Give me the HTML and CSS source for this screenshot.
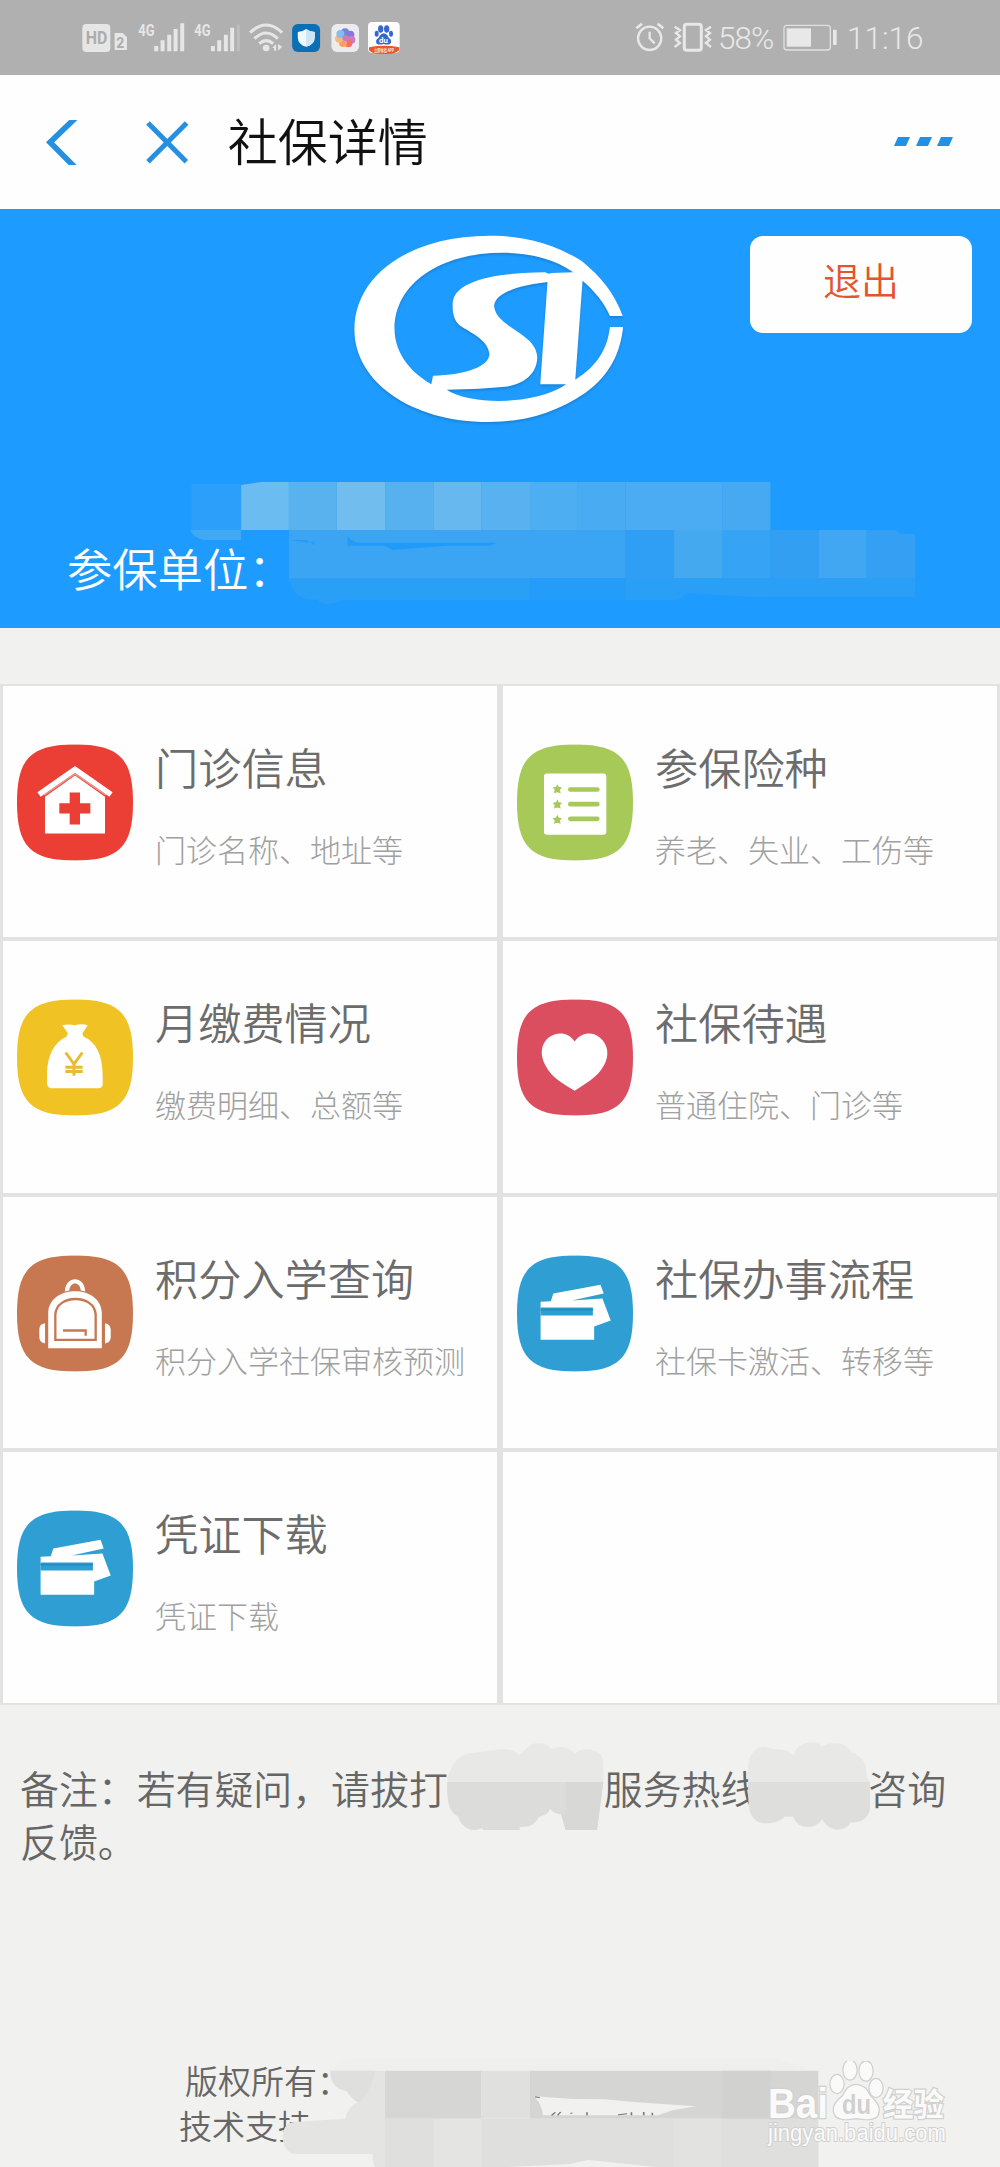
FILE: index.html
```
<!DOCTYPE html>
<html lang="zh-CN">
<head>
<meta charset="utf-8">
<title>社保详情</title>
<link rel="stylesheet" href="styles.css">
</head>
<body>
<svg class="defs" width="0" height="0">
  <defs>
    <symbol id="squircle" viewBox="0 0 100 100"><path d="M50 0C88 0 100 12 100 50S88 100 50 100 0 88 0 50 12 0 50 0Z"/></symbol>
    <symbol id="cards" viewBox="0 0 348 350">
      <g transform="scale(1.913 1) translate(-811 -78)" fill="#fff">
        <path d="M848 218L864 216 868 193 942 167 947 193 897 214 945 208 958 274 932 292V332H848Z"/>
        <path d="M848 235H930V259H848Z" fill="#2f9ed3"/>
        <path d="M848 239H930V244H848Z" fill="#2488bd"/>
      </g>
    </symbol>
  </defs>
</svg>
<div class="screen">
  <div class="status">
    <svg class="status-left" viewBox="60 0 970 225" width="323" height="75">
      <g fill="#e6e6e6">
        <rect x="67" y="72" width="84" height="84" rx="12"/>
        <path d="M164 99H188L201 112V150H164Z"/>
        <text x="235" y="107" font-size="49" font-weight="700" textLength="49" lengthAdjust="spacingAndGlyphs">4G</text>
        <text x="403" y="107" font-size="49" font-weight="700" textLength="49" lengthAdjust="spacingAndGlyphs">4G</text>
        <path d="M283 138h12v16h-12zM302 121h12v33h-12zM322 104h12v50h-12zM341 87h12v67h-12zM361 70h12v84h-12zM453 138h12v16h-12zM472 121h12v33h-12zM492 104h12v50h-12zM511 83h12v71h-12z"/>
        <path d="M531 74h9v80h-9z" opacity=".25"/>
        <circle cx="619" cy="144" r="10"/>
        <path d="M649 132V152H643V144H637ZM655 132V152L667 140Z"/>
      </g>
      <g fill="none" stroke="#e6e6e6" stroke-width="9"><path d="M571 98Q619 52 667 98M584 116Q619 82 654 116M598 131Q619 113 640 131"/></g>
      <text x="77" y="133" font-size="54" font-weight="700" fill="#acacac" textLength="65" lengthAdjust="spacingAndGlyphs">HD</text>
      <text x="169" y="143" font-size="42" font-weight="700" fill="#acacac">2</text>
      <rect x="697" y="72" width="84" height="84" rx="17" fill="#0b6fb5"/>
      <path d="M739 87Q750 96 765 96V113Q764 134 739 140Q715 134 714 113V96Q728 96 739 87Z" fill="#eefaff"/>
      <path d="M739 87Q750 96 765 96V113Q764 134 739 140Z" fill="#cde6f4"/>
      <rect x="815" y="72" width="83" height="84" rx="17" fill="#ececef"/>
      <g opacity=".85"><circle cx="856" cy="97" r="12" fill="#5b75de"/><circle cx="872" cy="104" r="12" fill="#7862d2"/><circle cx="875" cy="119" r="12" fill="#c767bb"/><circle cx="866" cy="130" r="12" fill="#f45b55"/><circle cx="850" cy="129" r="12" fill="#ff904e"/><circle cx="838" cy="116" r="12" fill="#ffae67"/><circle cx="842" cy="102" r="12" fill="#73b4f3"/><circle cx="857" cy="114" r="9" fill="#c06ab0"/></g>
      <rect x="925" y="66" width="95" height="92" rx="12" fill="#fff"/>
      <g fill="#3568cf"><ellipse cx="963" cy="87" rx="8" ry="11"/><ellipse cx="981" cy="87" rx="8" ry="11"/><ellipse cx="951" cy="101" rx="6" ry="9"/><ellipse cx="994" cy="101" rx="6" ry="9"/><path d="M972 100Q982 101 987 113 1000 122 991 132 984 135 972 132 958 136 951 131 945 121 957 113 963 101 972 100Z"/></g>
      <text x="958" y="130" font-size="24" font-weight="700" fill="#fff">du</text>
      <path d="M928 142Q972 133 1019 142V151Q1009 160 988 162H958Q935 160 928 151Z" fill="#e8582c"/>
      <text x="943" y="156" font-size="14" font-weight="700" fill="#ffe7d8" textLength="60" lengthAdjust="spacingAndGlyphs">立即体验 APP</text>
    </svg>
    <div class="status-right">
      <svg viewBox="40 0 235 225" width="78.3" height="75" fill="none" stroke="#e8e8e8">
        <circle cx="84" cy="115" r="35" stroke-width="7"/><path d="M84 95V115L99 130" stroke-width="7"/><path d="M44 85L61 71M108 71L125 85" stroke-width="8"/>
        <rect x="188" y="73" width="51" height="78" rx="7" stroke-width="9"/>
        <path d="M159 80L175 90 163 99 175 109 163 119 175 129 159 141M268 80L253 90 265 99 253 109 265 119 253 129 268 141" stroke-width="7"/>
      </svg>
      <span class="percent">58%</span>
      <svg viewBox="484 0 162 225" width="54" height="75"><rect x="487" y="76" width="139" height="74" rx="9" fill="none" stroke="#e0e0e0" stroke-width="4"/><path d="M495 85H568V140H495Z" fill="#e8e8e8"/><rect x="634" y="89" width="11" height="46" rx="3" fill="#e8e8e8"/></svg>
      <span class="clock">11:16</span>
    </div>
  </div>

  <header class="nav">
    <svg class="back" viewBox="140 119 95 135" width="31.7" height="45"><path d="M228 113L152 186 226 260" fill="none" stroke="#2590e2" stroke-width="17"/></svg>
    <svg class="close" viewBox="435 115 135 135" width="45" height="45"><path d="M444 124L559 240M560 124L444 240" stroke="#2590e2" stroke-width="15"/></svg>
    <h1>社保详情</h1>
    <svg class="more" viewBox="0 0 60 12" width="60" height="12" fill="#2590e2"><path d="M4 1H16L12 10H0ZM26 1H38L34 10H22ZM47 1H59L55 10H43Z"/></svg>
  </header>

  <section class="banner">
    <svg class="logo" viewBox="50 70 650 580" width="277.7" height="193.3" preserveAspectRatio="none" fill="#fff">
      <path d="M686 319H656C646 285 618 240 592 213L575 510C625 470 650 420 656 352H687C681 425 658 496 598 550C530 610 455 637 372 637C190 637 58 515 58 360C58 195 190 78 375 78C460 78 530 106 590 154C635 200 668 254 686 319ZM570 188C530 150 470 129 405 129C260 129 152 220 152 358C152 420 180 480 238 524L242 498C320 495 374 470 374 432C370 395 340 375 310 352C292 338 287 315 288 280C292 220 370 190 505 188L512 192 520 190ZM510 217C430 228 386 255 385 290C390 355 484 370 486 443C485 505 440 528 410 531Q355 538 274 540C325 585 480 590 554 524H493Z" fill-rule="evenodd"/>
    </svg>
    <button class="logout">退出</button>
    <p class="company">参保单位：</p>
    <svg class="mosaic" viewBox="0 0 1568 504" preserveAspectRatio="none">
      <path d="M300 72H378V210H300Z" fill="#2b9ff9"/>
      <path d="M298 210H378V240H318Q302 230 298 210Z" fill="#41a8f3"/>
      <path d="M378 75L410 66H453V210H378Z" fill="#6bbcf0"/>
      <path d="M453 66H528V210H453Z" fill="#59b1ee"/><path d="M528 66H604V210H528Z" fill="#70bdee"/><path d="M604 66H680V210H604Z" fill="#57b1ef"/><path d="M680 66H755V210H680Z" fill="#66b8ee"/><path d="M755 66H831V210H755Z" fill="#59b1ef"/><path d="M831 66H906V210H831Z" fill="#4eaef2"/><path d="M906 66H981V210H906Z" fill="#49abf2"/><path d="M981 66H1133V210H981Z" fill="#4bacf3"/><path d="M1133 66H1208V210H1133Z" fill="#46a9f2"/>
      <path d="M453 210H981V354H453Z" fill="#3ba5f3"/><path d="M981 210H1057V354H981Z" fill="#2f9ff5"/><path d="M1057 210H1133V354H1057Z" fill="#45a9f0"/><path d="M1133 210H1208V354H1133Z" fill="#36a3f4"/><path d="M1208 210H1284V354H1208Z" fill="#339ff3"/><path d="M1284 210H1359V354H1284Z" fill="#41a7f3"/><path d="M1359 210H1405L1412 222H1435V354H1359Z" fill="#35a0f3"/>
      <path d="M453 354H1435V411H1180L1075 398Q1068 420 1055 420H535Q513 445 495 418 460 425 453 354Z" fill="#2a9ff6"/>
      <path d="M831 354H981V420H831Z" fill="#239df9"/>
      <path d="M545 228Q552 248 565 248H779L768 257H700L615 270 603 257H545ZM453 240H480L493 256V244L486 248Z" fill="#209bfa"/>
    </svg>
  </section>

  <main class="grid">
    <a class="tile"><svg class="icon" viewBox="0 0 348 350"><use href="#squircle" width="348" height="350" fill="#eb3e34"/><g transform="translate(-51 -192)"><path d="M135 350L225 286 315 350V460H135Z" fill="#fff"/><path d="M117 343L225 268 333 343" fill="none" stroke="#fff" stroke-width="17"/><path d="M132 345L225 281 318 345" fill="none" stroke="#e99b94" stroke-width="4"/><path d="M209 337H240V369H271V400H240V433H209V400H178V369H209Z" fill="#eb3e34"/></g></svg><div><h2>门诊信息</h2><p>门诊名称、地址等</p></div></a>
    <a class="tile"><svg class="icon" viewBox="0 0 348 350"><use href="#squircle" width="348" height="350" fill="#a6c957"/><g transform="translate(-80 -194)" fill="#a6c957"><rect x="161" y="282" width="187" height="184" rx="9" fill="#fff"/><path d="M240 330H321M240 374H321M240 418H321" stroke="#a6c957" stroke-width="14" stroke-linecap="round"/><path id="star" d="M201 314L205 322 215 324 209 331 211 341 201 338 191 341 193 331 187 324 197 322Z"/><use href="#star" y="46"/><use href="#star" y="92"/></g></svg><div><h2>参保险种</h2><p>养老、失业、工伤等</p></div></a>
    <a class="tile"><svg class="icon" viewBox="0 0 348 350"><use href="#squircle" width="348" height="350" fill="#f1c224"/><g transform="translate(-50 -61)"><path d="M186 139Q203 135 224 139 242 133 262 139L246 164 250 174C288 190 307 230 307 292V317Q306 328 294 328H153Q141 327 140 315V280C142 229 162 190 198 174L203 164Z" fill="#fff"/><path d="M196 221L221 256 246 221M221 256V291M195 265H247M195 278H247" fill="none" stroke="#e7bc35" stroke-width="9"/></g></svg><div><h2>月缴费情况</h2><p>缴费明细、总额等</p></div></a>
    <a class="tile"><svg class="icon" viewBox="0 0 348 350"><use href="#squircle" width="348" height="350" fill="#db4e60"/><g transform="translate(-81 -61)"><path d="M254 188C276 158 310 159 330 177 355 198 359 231 342 259 323 296 285 314 254 336 221 314 185 298 166 259 148 227 153 194 177 175 202 157 236 160 254 188Z" fill="#fff"/></g></svg><div><h2>社保待遇</h2><p>普通住院、门诊等</p></div></a>
    <a class="tile"><svg class="icon" viewBox="0 0 348 350"><use href="#squircle" width="348" height="350" fill="#c77850"/><g transform="scale(1.913 1) translate(-27 -78)"><path d="M102 187C103 138 133 138 134 187L127 184C126 156 110 156 109 184ZM76 357V250C78 165 158 165 160 250V357ZM71 282Q62 284 62 300V326Q63 341 71 343ZM165 282Q173 284 174 300V326Q173 341 165 343Z" fill="#fff"/></g><g fill="none" stroke="#c77850" stroke-width="7"><path d="M115 254V178C118 116 233 116 236 178V254ZM138 226H206V242"/></g></svg><div><h2>积分入学查询</h2><p>积分入学社保审核预测</p></div></a>
    <a class="tile"><svg class="icon" viewBox="0 0 348 350"><use href="#squircle" width="348" height="350" fill="#2f9ed3"/><use href="#cards" width="348" height="350"/></svg><div><h2>社保办事流程</h2><p>社保卡激活、转移等</p></div></a>
    <a class="tile"><svg class="icon" viewBox="0 0 348 350"><use href="#squircle" width="348" height="350" fill="#2f9ed3"/><use href="#cards" width="348" height="350"/></svg><div><h2>凭证下载</h2><p>凭证下载</p></div></a>
    <div class="tile"></div>
  </main>

  <section class="note">
    <p>备注：若有疑问，请拔打<span class="gap-a"></span>服务热线<span class="gap-b"></span>咨询反馈。</p>
    <svg class="smudge" viewBox="0 0 1568 450" preserveAspectRatio="none">
      <path d="M701 186C704 140 720 98 742 99L785 88Q805 85 814 106C825 90 829 69 845 69 860 69 862 86 866 87 883 70 896 92 902 100 912 80 944 82 946 125V186Z" fill="#e8e8e7"/>
      <path d="M701 186H946L941 260 936 330H887L880 283Q870 283 863 267 860 283 845 291 838 323 815 321V330H757V324C735 342 722 315 718 288 704 275 701 250 701 186Z" fill="#dcdcdb"/>
      <path d="M887 186H946L936 330H887L880 283H887Z" fill="#d8d8d7"/>
      <path d="M1173 186V135C1178 75 1200 73 1213 88Q1235 86 1244 107C1250 60 1282 60 1289 80 1305 60 1330 68 1335 98 1357 110 1359 140 1359 170L1364 186Z" fill="#e8e8e7"/>
      <path d="M1173 186H1364V270Q1358 310 1334 307C1327 335 1300 340 1289 296 1280 330 1250 330 1244 290H1230C1220 312 1200 312 1190 307 1173 290 1173 260 1173 186Z" fill="#dededd"/>
    </svg>
  </section>

  <footer class="foot">
    <p class="rights">版权所有：</p>
    <p>技术支持</p>
    <svg class="smudge-foot" viewBox="0 0 1568 411" preserveAspectRatio="none">
      <path d="M330 105Q345 86 375 85H1150L1215 122H320Z" fill="#efefed"/>
      <path d="M318 122H420V411H402Q396 400 397 372H250Q229 360 229 320 230 280 250 276L346 266Q350 230 370 217 360 210 348 182 318 175 318 122Z" fill="#e4e4e3"/>
      <path d="M318 122H402Q390 200 370 217 360 210 348 182 318 175 318 122Z" fill="#dfdfde"/>
      <path d="M420 122H600V266H420Z" fill="#d6d6d5"/><path d="M600 122H690V266H600Z" fill="#e0e0df"/><path d="M690 122H1229V266H690Z" fill="#d5d5d4"/><path d="M1048 122H1140V266H1048Z" fill="#d1d1d0"/>
      <path d="M420 266H1229V411H925L800 390 765 402 650 411H420Z" fill="#dfdfde"/><path d="M510 266H600V411H510Z" fill="#e4e4e3"/><path d="M958 266H1048V411H958Z" fill="#e2e2e1"/>
      <path d="M698 199L770 207 830 208 890 217 1000 229 957 241 930 256H715Q712 220 698 199Z" fill="#f1f1ef"/>
      <path d="M700 200L709 203M738 247L731 256M748 246L742 256M766 250H770M797 247V256M855 254L872 251M880 247V256M903 246V256M919 248V256" stroke="#777" stroke-width="3"/>
    </svg>
    <svg class="watermark" viewBox="0 0 190 92" width="190" height="92">
      <g fill="#fafafa" stroke="#d0d0cf" stroke-width="2.5" paint-order="stroke">
        <text x="6" y="57" font-size="43" font-weight="700" textLength="60" lengthAdjust="spacingAndGlyphs">Bai</text>
        <ellipse cx="75" cy="23" rx="6.5" ry="9"/><ellipse cx="88" cy="9" rx="6.5" ry="9.5"/><ellipse cx="104" cy="10" rx="6.5" ry="9.5"/><ellipse cx="114" cy="27" rx="6.5" ry="9"/>
        <path d="M94 24Q103 24 108 35C116 43 119 48 115 55Q110 60 94 57 79 60 74 55C69 47 73 42 81 35Q86 24 94 24Z"/>
        <text class="hanzi" x="121" y="55" font-size="32" font-weight="700" textLength="61" lengthAdjust="spacingAndGlyphs">经验</text>
        <text x="6" y="80" font-size="23" stroke-width="2" textLength="178" lengthAdjust="spacingAndGlyphs">jingyan.baidu.com</text>
      </g>
      <text x="80" y="53" font-size="27" font-weight="700" fill="#d0d0cf" textLength="29" lengthAdjust="spacingAndGlyphs">du</text>
    </svg>
  </footer>
</div>
</body>
</html>
```
FILE: styles.css
```
* { box-sizing: border-box; margin: 0; padding: 0; }
body { background: #f1f1ef; font-family: Roboto, "Noto Sans CJK SC", sans-serif; font-weight: 350; }
.defs { position: absolute; }
.screen { width: 1000px; height: 2167px; overflow: hidden; display: flex; flex-direction: column; font-family: "Noto Sans CJK SC", sans-serif; }
.status { height: 75px; flex: none; background: #b0b0b0; display: flex; justify-content: space-between; padding: 0 79px 0 80px; font-family: Roboto, "Noto Sans CJK SC", sans-serif; }
.status-right { display: flex; align-items: center; color: #e8e8e8; font-size: 31.5px; font-weight: 300; line-height: 75px; }
.percent { width: 56px; margin: 2px 9px 0 5px; letter-spacing: -1px; }
.clock { width: 74px; margin: 2px 0 0 10px; letter-spacing: 0; }
.nav { height: 134px; flex: none; background: #fefefe; display: flex; align-items: center; padding: 0 47px 0 46px; }
.close { margin-left: 67px; }
.nav h1 { margin-left: 38px; font-size: 50px; font-weight: 350; line-height: 60px; color: #111; padding-bottom: 6px; }
.more { margin: 0 -1px 0 auto; }
.banner { height: 419px; flex: none; position: relative; background: #1e9bff; display: grid; grid-template-columns: 351px 1fr 222px; padding: 24px 28px 0 0; grid-template-rows: 300px 1fr; }
.logo { grid-column: 2; filter: drop-shadow(0 2px 1px rgba(20, 80, 130, .3)); }
.logout { height: 97px; margin-top: 3px; border: 0; border-radius: 13px; background: #fefefe; color: #e2552f; font: 350 38px/48px "Noto Sans CJK SC", sans-serif; padding-bottom: 12px; }
.company { grid-column: 1 / -1; padding: 4px 0 0 67px; color: #fff; font-size: 45.3px; line-height: 60px; }
.mosaic { position: absolute; left: 0; top: 251px; width: 1000px; height: 168px; }
.grid { height: 1021px; flex: none; margin-top: 56px; display: grid; grid-template-columns: 1fr 1fr; grid-template-rows: repeat(4, 1fr); }
.tile { background: #fefefe; border: 2px solid #e2e2e2; border-width: 2px 3px; display: flex; gap: 22px; padding: 58px 0 0 14px; }
.icon { width: 116px; height: 117px; flex: none; }
.tile h2 { margin-top: -2px; font-size: 43.2px; font-weight: 350; line-height: 48px; color: #6c6c6c; white-space: nowrap; }
.tile p { margin-top: 39px; font-size: 31px; font-weight: 300; line-height: 40px; color: #a0a0a0; white-space: nowrap; }
.note { height: 345px; flex: none; position: relative; padding: 56px 0 0 20px; color: #666; font-size: 38.9px; line-height: 53px; }
.note p { width: 945px; }
.gap-a { display: inline-block; width: 156px; }
.gap-b { display: inline-block; width: 109px; }
.smudge { position: absolute; left: 0; top: 15px; width: 1000px; height: 150px; }
.foot { flex: 1; position: relative; padding: 8px 0 0 179px; color: #666; font-size: 33px; line-height: 45px; }
.rights { padding-left: 6px; }
.smudge-foot { position: absolute; left: 160px; bottom: 0; width: 840px; height: 137px; }
.watermark { position: absolute; left: 762px; bottom: 14px; font-family: "Liberation Sans", "Noto Sans CJK SC", sans-serif; }
.hanzi { font-family: "Noto Sans CJK SC", sans-serif; }
```
